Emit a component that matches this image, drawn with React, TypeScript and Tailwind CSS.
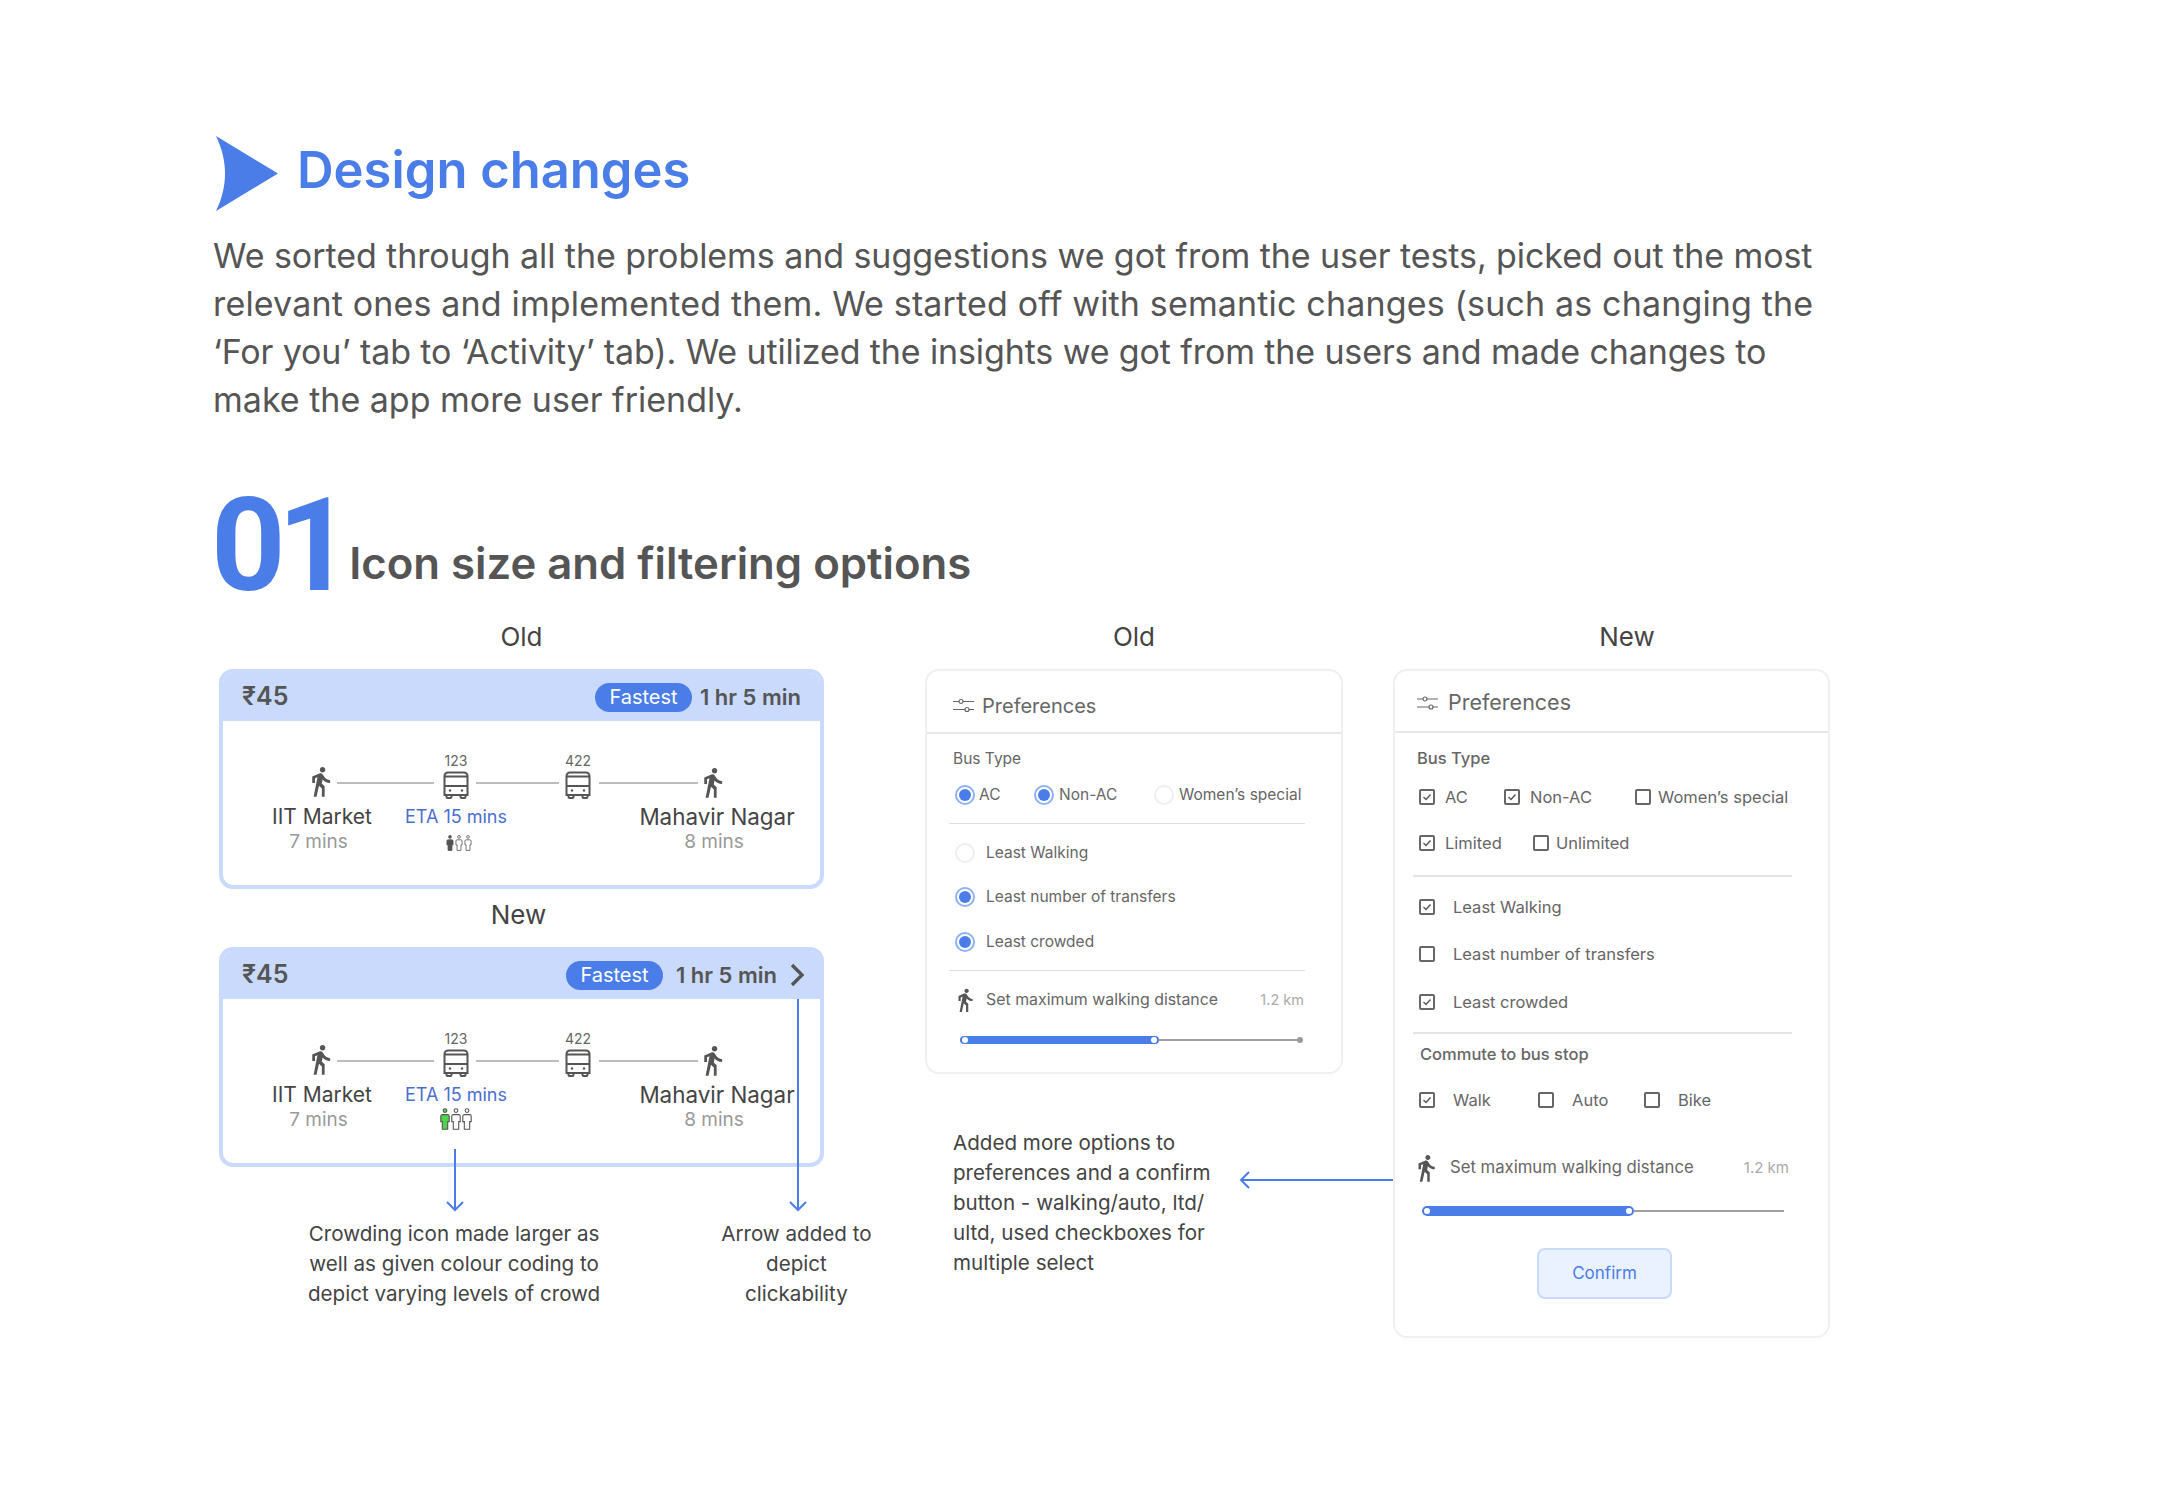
import { MdDirectionsWalk } from "react-icons/md";

const Walker = ({ className }: { className: string }) => (
  <MdDirectionsWalk className={className} />
);

const Bus = () => (
  <svg viewBox="0 0 26 28" className="block w-[26px] h-[28px] text-[#555]" fill="none" stroke="currentColor" strokeWidth="2">
    <path d="M5 1.5h16a3.5 3.5 0 0 1 3.5 3.5v19h-23V5A3.5 3.5 0 0 1 5 1.5z" />
    <path d="M1.5 5.5h23M1.5 15h23" />
    <path d="M3.5 24v2a1 1 0 0 0 1 1h3a1 1 0 0 0 1-1v-2M17.5 24v2a1 1 0 0 0 1 1h3a1 1 0 0 0 1-1v-2" />
    <circle cx="7" cy="19.5" r="1.2" fill="currentColor" stroke="none" />
    <circle cx="19" cy="19.5" r="1.2" fill="currentColor" stroke="none" />
  </svg>
);

const Person = ({ fill, stroke, className }: { fill: string; stroke: string; className: string }) => (
  <svg viewBox="0 0 10 22" className={className}>
    <circle cx="5" cy="2.6" r="1.9" fill={fill} stroke={stroke} strokeWidth="1.1" />
    <path
      d="M2.4 6.6h5.2a1.6 1.6 0 0 1 1.6 1.6v5.4H7.7v7.6H2.3v-7.6H.8V8.2a1.6 1.6 0 0 1 1.6-1.6z"
      fill={fill}
      stroke={stroke}
      strokeWidth="1.1"
    />
  </svg>
);

const Sliders = ({ className }: { className: string }) => (
  <svg viewBox="0 0 21 15" className={className} fill="none" stroke="#666" strokeWidth="1.2">
    <path d="M0 3.5h6M10 3.5h11M0 11.5h12M16 11.5h5" />
    <circle cx="8" cy="3.5" r="2" />
    <circle cx="14" cy="11.5" r="2" />
  </svg>
);

const RouteCard = ({ isNew }: { isNew?: boolean }) => (
  <div className="w-[605px] h-[220px] border-4 border-[#c9dafc] rounded-[14px] overflow-hidden bg-white">
    <div className="h-[48px] bg-[#c9dafc] flex items-center pl-[19px] text-[#555]">
      <span className="text-[25px] font-semibold w-[60px]">₹45</span>
      {isNew ? (
        <div className="ml-[264px] flex items-center">
          <span className="w-[97px] h-[29px] rounded-full bg-[#4a7de8] text-white text-[20px] flex items-center justify-center">Fastest</span>
          <span className="ml-[13px] w-[105px] text-[22px] font-semibold whitespace-nowrap">1 hr 5 min</span>
          <svg viewBox="0 0 16 24" className="ml-[8px] w-[16px] h-[24px]" fill="none" stroke="#555" strokeWidth="3.4"><path d="M3 2l10 10-10 10" /></svg>
        </div>
      ) : (
        <div className="ml-[293px] flex items-center">
          <span className="w-[97px] h-[29px] rounded-full bg-[#4a7de8] text-white text-[20px] flex items-center justify-center">Fastest</span>
          <span className="ml-[8px] text-[22px] font-semibold whitespace-nowrap">1 hr 5 min</span>
        </div>
      )}
    </div>
    <div className="pt-[33px] pl-[81px] flex items-end text-[#555]">
      <Walker className="w-[33px] h-[33px] mb-[1px]" />
      <div className="w-[97px] h-[2px] mb-[15px] bg-[#bcbcbc]" />
      <div className="ml-[9px] w-[26px] flex flex-col items-center">
        <span className="text-[14px] leading-[14px] mb-[3px] text-[#666]">123</span>
        <Bus />
      </div>
      <div className="ml-[7px] w-[83px] h-[2px] mb-[15px] bg-[#bcbcbc]" />
      <div className="ml-[6px] w-[26px] flex flex-col items-center">
        <span className="text-[14px] leading-[14px] mb-[3px] text-[#666]">422</span>
        <Bus />
      </div>
      <div className="ml-[8px] w-[99px] h-[2px] mb-[15px] bg-[#bcbcbc]" />
      <Walker className="-ml-[2px] w-[33px] h-[33px]" />
    </div>
    <div className="mt-[5px] pl-[49px] flex items-start whitespace-nowrap">
      <div className="w-[100px] flex flex-col items-center">
        <span className="text-[21px] leading-[26px] text-[#444]">IIT Market</span>
        <span className="pr-[7px] text-[19px] leading-[24px] text-[#999]">7 mins</span>
      </div>
      <div className="ml-[34px] w-[100px] flex flex-col items-center">
        <span className="text-[18px] leading-[26px] text-[#4a6fd0]">ETA 15 mins</span>
        {isNew ? (
          <div className="flex">
            <Person fill="#4fd34a" stroke="#555" className="w-[10px] h-[22px]" />
            <Person fill="#fff" stroke="#555" className="ml-[1px] w-[10px] h-[22px]" />
            <Person fill="#fff" stroke="#555" className="ml-[1px] w-[10px] h-[22px]" />
          </div>
        ) : (
          <div className="mt-[5px] ml-[5px] flex">
            <Person fill="#555" stroke="#555" className="w-[8px] h-[16px]" />
            <Person fill="#fff" stroke="#555" className="ml-[1px] w-[8px] h-[16px]" />
            <Person fill="#fff" stroke="#555" className="ml-[1px] w-[8px] h-[16px]" />
          </div>
        )}
      </div>
      <div className="ml-[131px] w-[160px] flex flex-col items-center">
        <span className="text-[22.4px] leading-[26px] text-[#444]">Mahavir Nagar</span>
        <span className="pr-[6px] text-[19px] leading-[24px] text-[#999]">8 mins</span>
      </div>
    </div>
  </div>
);

const Radio = ({ on }: { on?: boolean }) => (
  <span className={on ? "shrink-0 w-[20px] h-[20px] rounded-full border-2 border-[#8fb0f5] flex items-center justify-center" : "shrink-0 w-[20px] h-[20px] rounded-full border-2 border-[#eeeeee]"}>
    {on && <span className="w-[12px] h-[12px] rounded-full bg-[#4a7de8]" />}
  </span>
);

const Box = ({ on }: { on?: boolean }) => (
  <span className="shrink-0 w-[16px] h-[16px] rounded-[2px] border-2 border-[#666] flex items-center justify-center">
    {on && (
      <svg viewBox="0 0 12 12" className="w-[12px] h-[12px]" fill="none" stroke="#555" strokeWidth="1.4"><path d="M2.5 6l2.5 2.5 4.5-5" /></svg>
    )}
  </span>
);

const Slider = ({ blue, grey, className, h }: { blue: string; grey: string; className: string; h: string }) => (
  <div className={`flex items-center ${className}`}>
    <div className={`${blue} ${h} rounded-full bg-[#4a7de8] flex items-center justify-between px-[2px]`}>
      <span className="w-[6px] h-[6px] rounded-full bg-white" />
      <span className="w-[6px] h-[6px] rounded-full bg-white" />
    </div>
    <div className={`${grey} h-[2px] bg-[#a0a0a0]`} />
  </div>
);

const OldPreferences = () => (
  <div className="w-[418px] h-[405px] border-2 border-[#f0f0f0] rounded-[14px] text-[#666] text-[15.5px]">
    <div className="h-[63px] pt-[8px] pl-[26px] flex items-center border-b-2 border-[#e8e8e8]">
      <Sliders className="w-[21px] h-[15px]" />
      <span className="ml-[8px] text-[20px]">Preferences</span>
    </div>
    <div className="mt-[14px] ml-[26px] h-[22px] flex items-center">Bus Type</div>
    <div className="mt-[14px] ml-[28px] h-[22px] flex items-center whitespace-nowrap">
      <div className="w-[79px] flex items-center gap-[4px]"><Radio on />AC</div>
      <div className="w-[120px] flex items-center gap-[5px]"><Radio on />Non-AC</div>
      <div className="flex items-center gap-[5px]"><Radio />Women’s special</div>
    </div>
    <div className="mt-[17px] ml-[22px] w-[356px] h-[1px] bg-[#ddd]" />
    <div className="mt-[18px] ml-[28px] h-[22px] flex items-center gap-[11px]"><Radio />Least Walking</div>
    <div className="mt-[22px] ml-[28px] h-[22px] flex items-center gap-[11px]"><Radio on />Least number of transfers</div>
    <div className="mt-[23px] ml-[28px] h-[22px] flex items-center gap-[11px]"><Radio on />Least crowded</div>
    <div className="mt-[17px] ml-[22px] w-[356px] h-[1px] bg-[#ddd]" />
    <div className="mt-[18px] ml-[25px] w-[352px] h-[22px] flex items-center">
      <Walker className="w-[26px] h-[26px] text-[#555]" />
      <span className="ml-[8px] text-[15.9px]">Set maximum walking distance</span>
      <span className="ml-auto text-[14.5px] text-[#aaa]">1.2 km</span>
    </div>
    <div className="mt-[25px] ml-[33px] flex items-center">
      <Slider blue="w-[199px]" grey="w-[138px]" h="h-[8px]" className="" />
      <span className="w-[6px] h-[6px] rounded-full bg-[#999]" />
    </div>
  </div>
);

const Option = ({ on, label, className }: { on?: boolean; label: string; className: string }) => (
  <div className={`flex items-center whitespace-nowrap ${className}`}>
    <Box on={on} />
    {label}
  </div>
);

const NewPreferences = () => (
  <div className="w-[437px] h-[669px] border-2 border-[#f0f0f0] rounded-[14px] text-[#666] text-[16.5px]">
    <div className="h-[62px] pt-[3px] pl-[22px] flex items-center border-b-2 border-[#e8e8e8]">
      <Sliders className="w-[21px] h-[16px]" />
      <span className="ml-[10px] text-[21.5px]">Preferences</span>
    </div>
    <div className="mt-[13px] ml-[22px] h-[24px] flex items-center font-medium">Bus Type</div>
    <div className="mt-[15px] ml-[24px] h-[24px] flex items-center">
      <Option on label="AC" className="w-[85px] gap-[10px]" />
      <Option on label="Non-AC" className="w-[131px] gap-[10px]" />
      <Option label="Women’s special" className="gap-[7px]" />
    </div>
    <div className="mt-[22px] ml-[24px] h-[24px] flex items-center">
      <Option on label="Limited" className="w-[114px] gap-[10px]" />
      <Option label="Unlimited" className="gap-[7px]" />
    </div>
    <div className="mt-[20px] ml-[18px] w-[379px] h-[2px] bg-[#e4e4e4]" />
    <Option on label="Least Walking" className="mt-[18px] ml-[24px] h-[24px] gap-[18px]" />
    <Option label="Least number of transfers" className="mt-[23px] ml-[24px] h-[24px] gap-[18px]" />
    <Option on label="Least crowded" className="mt-[24px] ml-[24px] h-[24px] gap-[18px]" />
    <div className="mt-[18px] ml-[18px] w-[379px] h-[2px] bg-[#e4e4e4]" />
    <div className="mt-[8px] ml-[25px] h-[24px] flex items-center font-medium">Commute to bus stop</div>
    <div className="mt-[22px] ml-[24px] h-[24px] flex items-center">
      <Option on label="Walk" className="w-[119px] gap-[18px]" />
      <Option label="Auto" className="w-[106px] gap-[18px]" />
      <Option label="Bike" className="gap-[18px]" />
    </div>
    <div className="mt-[44px] ml-[16px] w-[378px] h-[24px] flex items-center">
      <Walker className="w-[30px] h-[30px] text-[#555]" />
      <span className="ml-[9px] text-[16.7px]">Set maximum walking distance</span>
      <span className="ml-auto text-[15px] text-[#aaa]">1.2 km</span>
    </div>
    <Slider blue="w-[212px]" grey="w-[150px]" h="h-[10px]" className="mt-[26px] ml-[27px]" />
    <button className="block mt-[32px] ml-[142px] w-[135px] h-[51px] rounded-[8px] border-2 border-[#c9dafc] bg-[#ebf2ff] text-[#4a7de8] text-[17px]">Confirm</button>
  </div>
);

const App = () => {
  return (
    <div className="relative w-[2169px] h-[1494px] overflow-hidden bg-white pt-[136px] pl-[213px] text-[#555] font-['Inter',sans-serif]">
      <div className="flex items-center h-[75px]">
        <svg viewBox="0 0 63 75" className="ml-[3px] w-[63px] h-[75px]">
          <path d="M0 0L62 37.5L0 75C12 50 12 25 0 0Z" fill="#4a7de8" />
        </svg>
        <h1 className="ml-[18px] mb-[7px] text-[50.7px] leading-none font-semibold text-[#4a7de8]">Design changes</h1>
      </div>
      <p className="mt-[21px] text-[34px] leading-[48px] whitespace-nowrap">
        <span className="tracking-[-0.07px]">We sorted through all the problems and suggestions we got from the user tests, picked out the most</span><br />
        <span className="tracking-[0.16px]">relevant ones and implemented them. We started off with semantic changes (such as changing the</span><br />
        <span className="tracking-[-0.12px]">‘For you’ tab to ‘Activity’ tab). We utilized the insights we got from the users and made changes to</span><br />
        make the app more user friendly.
      </p>
      <div className="mt-[63px] flex items-end">
        <span className="-ml-[2px] font-['Roboto',sans-serif] text-[130px] leading-[118px] font-bold tracking-[-8px] text-[#4a7de8]">01</span>
        <h2 className="ml-[5px] mb-[19px] text-[43.7px] leading-none font-semibold">Icon size and filtering options</h2>
      </div>

      <div className="mt-[17px] ml-[6px] flex items-start">
        <div className="w-[605px] shrink-0">
          <div className="h-[30px] mb-[17px] text-center text-[26px] leading-[30px] text-[#444]">Old</div>
          <RouteCard />
          <div className="mt-[11px] mb-[17px] pr-[6px] h-[30px] text-center text-[26px] leading-[30px] text-[#444]">New</div>
          <RouteCard isNew />
          <div className="mt-[52px] flex text-[20.6px] leading-[30px] text-[#444] text-center whitespace-nowrap">
            <p className="ml-[89px] w-[300px]">Crowding icon made larger as<br />well as given colour coding to<br />depict varying levels of crowd</p>
            <p className="ml-[121px] w-[160px]">Arrow added to<br />depict<br />clickability</p>
          </div>
        </div>
        <div className="ml-[101px] w-[418px] shrink-0">
          <div className="h-[30px] mb-[17px] text-center text-[26px] leading-[30px] text-[#444]">Old</div>
          <OldPreferences />
          <p className="mt-[54px] ml-[28px] text-[20.6px] leading-[30px] text-[#444] whitespace-nowrap">Added more options to<br />preferences and a confirm<br />button - walking/auto, ltd/<br />ultd, used checkboxes for<br />multiple select</p>
        </div>
        <div className="ml-[50px] w-[437px] shrink-0">
          <div className="h-[30px] mb-[17px] pl-[31px] text-center text-[26px] leading-[30px] text-[#444]">New</div>
          <NewPreferences />
        </div>
      </div>

      {/* annotation arrows sit on top of the cards */}
      <svg className="absolute left-[446px] top-[1149px] w-[18px] h-[63px]" viewBox="0 0 18 63" fill="none" stroke="#4a7de8" strokeWidth="2">
        <path d="M9 0v61M1 53l8 8 8-8" />
      </svg>
      <svg className="absolute left-[789px] top-[999px] w-[18px] h-[213px]" viewBox="0 0 18 213" fill="none" stroke="#4a7de8" strokeWidth="2">
        <path d="M9 0v211M1 203l8 8 8-8" />
      </svg>
      <svg className="absolute left-[1238px] top-[1171px] w-[155px] h-[18px]" viewBox="0 0 155 18" fill="none" stroke="#4a7de8" strokeWidth="2">
        <path d="M155 9H3M11 1L3 9l8 8" />
      </svg>
    </div>
  );
};

export default App;
